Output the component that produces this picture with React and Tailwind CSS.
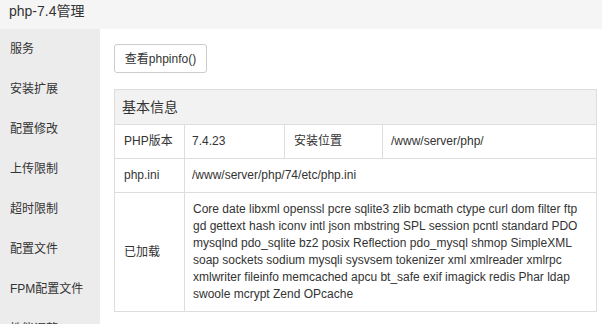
import React from 'react'

const menu = ['服务', '安装扩展', '配置修改', '上传限制', '超时限制', '配置文件', 'FPM配置文件', '性能调整']

const loaded = [
  'Core date libxml openssl pcre sqlite3 zlib bcmath ctype curl dom filter ftp',
  'gd gettext hash iconv intl json mbstring SPL session pcntl standard PDO',
  'mysqlnd pdo_sqlite bz2 posix Reflection pdo_mysql shmop SimpleXML',
  'soap sockets sodium mysqli sysvsem tokenizer xml xmlreader xmlrpc',
  'xmlwriter fileinfo memcached apcu bt_safe exif imagick redis Phar ldap',
  'swoole mcrypt Zend OPcache',
]

export default function App() {
  return (
    <div
      className="w-[602px] h-[324px] overflow-hidden flex flex-col text-[#333]"
      style={{ fontFamily: '"Liberation Sans", Arial, "Noto Sans CJK SC", sans-serif' }}
    >
      <div className="h-[29px] shrink-0 bg-[#f5f5f5] px-[9px] pt-[1px] text-[14px] leading-[20px]">
        php-7.4管理
      </div>
      <div className="flex flex-1 min-h-0">
        <div className="w-[100px] shrink-0 bg-[#ececec]">
          {menu.map((m) => (
            <div key={m} className="h-[40px] flex items-center pl-[10px] text-[12px]">
              {m}
            </div>
          ))}
        </div>
        <div className="flex-1 bg-white pl-[14px] pr-[5px] pt-[15px]">
          <button className="h-[29px] w-[93px] border border-[#ccc] rounded-[3px] bg-white text-[12px] text-[#333]">
            查看phpinfo()
          </button>
          <table className="mt-[16px] w-[483px] table-fixed border-collapse text-[12px] leading-[17px]">
            <colgroup>
              <col className="w-[70px]" />
              <col className="w-[100px]" />
              <col className="w-[98px]" />
              <col />
            </colgroup>
            <thead>
              <tr>
                <th
                  colSpan={4}
                  className="h-[35px] border border-[#ddd] bg-[#f2f2f2] text-left font-normal text-[14px] px-[7px]"
                >
                  基本信息
                </th>
              </tr>
            </thead>
            <tbody>
              <tr className="h-[34px]">
                <td className="border border-[#ddd] px-[9px]">PHP版本</td>
                <td className="border border-[#ddd] px-[7px]">7.4.23</td>
                <td className="border border-[#ddd] px-[9px]">安装位置</td>
                <td className="border border-[#ddd] px-[8px]">/www/server/php/</td>
              </tr>
              <tr className="h-[34px]">
                <td className="border border-[#ddd] px-[9px]">php.ini</td>
                <td colSpan={3} className="border border-[#ddd] px-[7px]">
                  /www/server/php/74/etc/php.ini
                </td>
              </tr>
              <tr>
                <td className="border border-[#ddd] px-[9px]">已加载</td>
                <td colSpan={3} className="border border-[#ddd] px-[8px] py-[8px]">
                  {loaded.map((l) => (
                    <div key={l} className="whitespace-nowrap">
                      {l}
                    </div>
                  ))}
                </td>
              </tr>
            </tbody>
          </table>
        </div>
      </div>
    </div>
  )
}
